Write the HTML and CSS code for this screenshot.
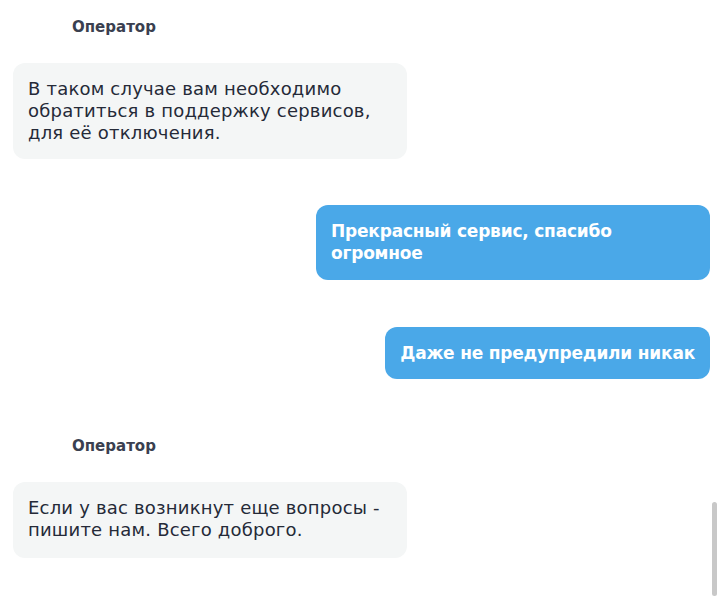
FILE: index.html
```html
<!DOCTYPE html>
<html lang="ru">
<head>
<meta charset="utf-8">
<link rel="stylesheet" href="styles.css">
</head>
<body>
<div class="chat">
  <div class="label">Оператор</div>
  <div class="msg in m1">В таком случае вам необходимо обратиться в поддержку сервисов, для её отключения.</div>
  <div class="msg out m2">Прекрасный сервис, спасибо огромное</div>
  <div class="msg out m3">Даже не предупредили никак</div>
  <div class="label l2">Оператор</div>
  <div class="msg in m4">Если у вас возникнут еще вопросы - пишите нам. Всего доброго.</div>
</div>
<div class="scrollbar"></div>
</body>
</html>
```
FILE: styles.css
```css
html, body {
  margin: 0;
  padding: 0;
  background: #ffffff;
  height: 100%;
  overflow: hidden;
}
body {
  font-family: "DejaVu Sans", "Liberation Sans", sans-serif;
  position: relative;
}
.chat {
  display: flex;
  flex-direction: column;
  padding: 18px 18px 0 13px;
}
.label {
  font-size: 15px;
  line-height: 18px;
  font-weight: 700;
  color: #3a3f50;
  padding-left: 59px;
}
.msg {
  box-sizing: border-box;
  max-width: 394px;
  padding: 15px 15px;
  line-height: 22px;
  border-radius: 12px;
}
.in {
  align-self: flex-start;
  background: #f4f6f6;
  color: #252a38;
  font-size: 18px;
  letter-spacing: 0.2px;
}
.out {
  align-self: flex-end;
  background: #4aa8e8;
  color: #ffffff;
  font-weight: 700;
  font-size: 17px;
  letter-spacing: -0.2px;
}
.m1 { margin-top: 27px; }
.m2 { margin-top: 46px; padding-bottom: 16px; }
.m3 { margin-top: 47px; }
.l2 { margin-top: 58px; }
.m4 { margin-top: 27px; padding-bottom: 17px; }
.scrollbar {
  position: absolute;
  left: 712px;
  top: 502px;
  width: 5px;
  height: 94px;
  border-radius: 3px;
  background: #c8c8c8;
}
```
